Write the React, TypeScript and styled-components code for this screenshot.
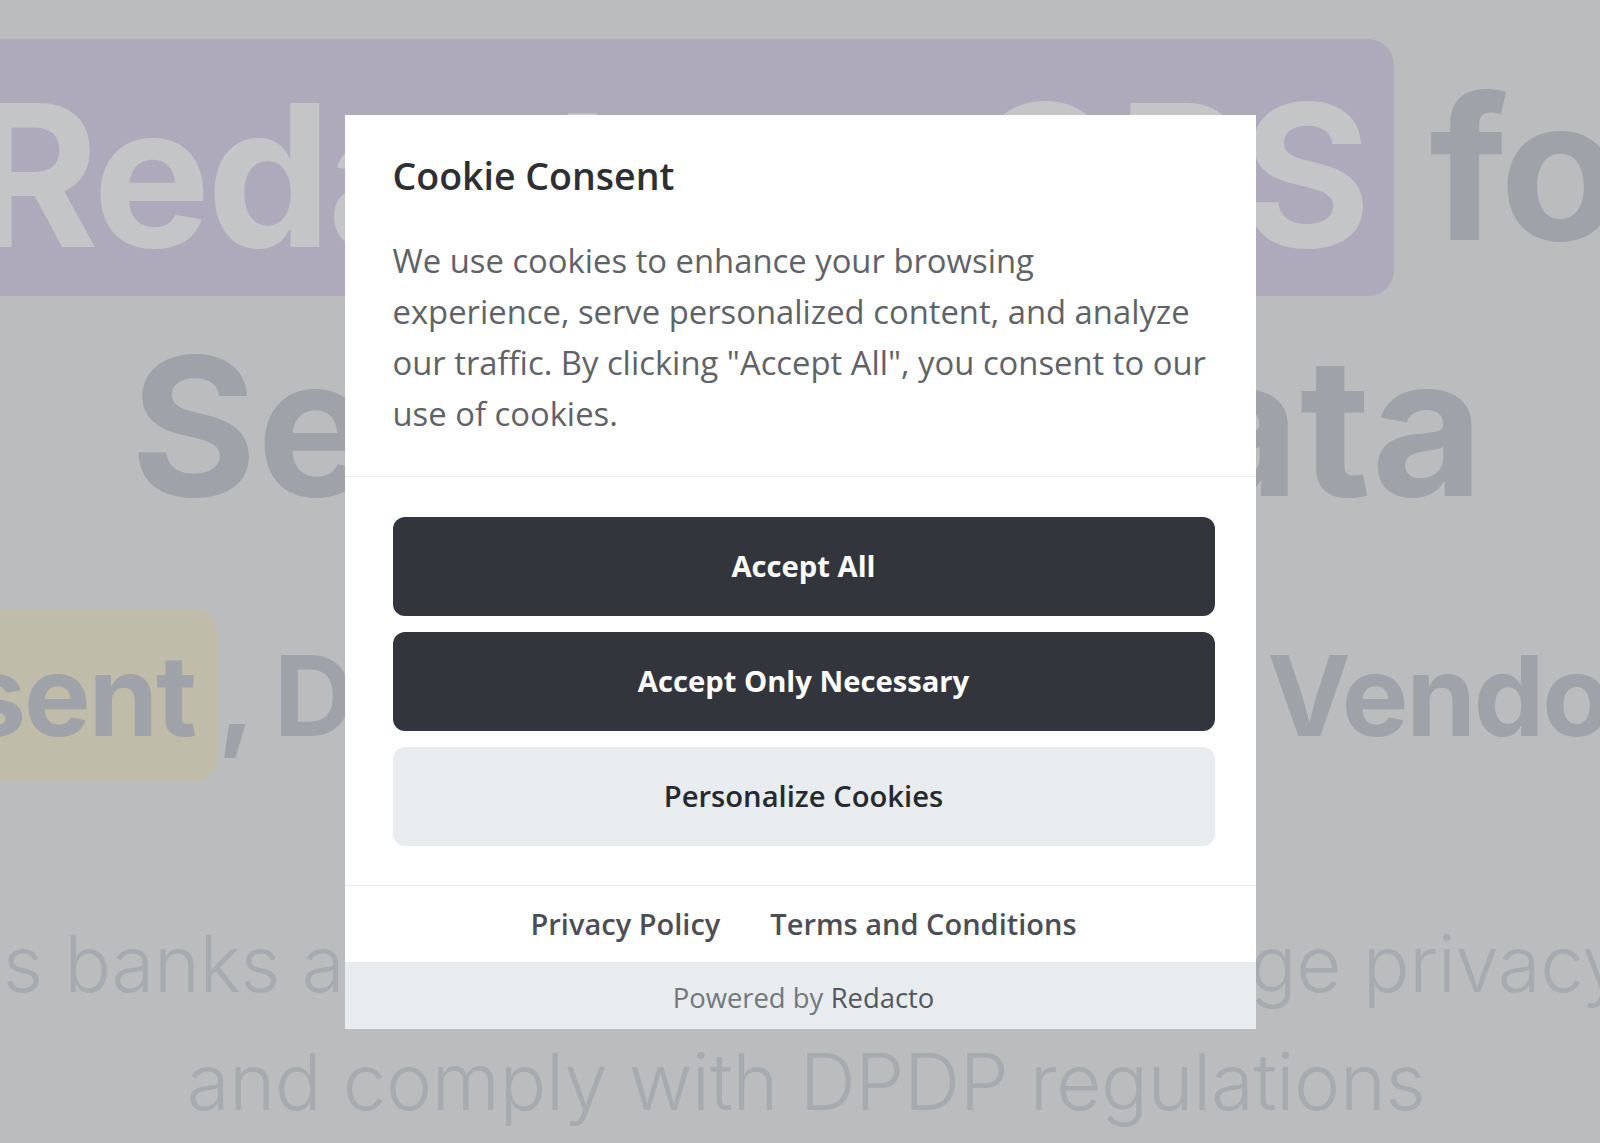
import React from "react";
import styled, { createGlobalStyle } from "styled-components";

const GlobalStyle = createGlobalStyle`
  html, body {
    margin: 0;
    padding: 0;
  }
  body {
    background: #bbbcbe;
    overflow: hidden;
  }
  * {
    box-sizing: border-box;
  }
`;

/* ---------- dimmed landing page behind the dialog ---------- */

const Page = styled.main`
  height: 1143px;
  overflow: hidden;
  background: #bbbcbe;
  font-family: Inter, "Liberation Sans", sans-serif;
  display: flex;
  flex-direction: column;
  padding-top: 39px;
  color: #9fa2a8;
`;

const SplitLine = styled.div<{ $ml: number; $mr: number; $top?: number }>`
  display: flex;
  align-items: center;
  justify-content: space-between;
  white-space: nowrap;
  margin: ${(p) => p.$top ?? 0}px ${(p) => p.$mr}px 0 ${(p) => p.$ml}px;
`;

const CenterLine = styled.div<{ $shift?: number }>`
  display: flex;
  justify-content: center;
  white-space: nowrap;
  padding-left: ${(p) => p.$shift ?? 0}px;
`;

const MegaGroup = styled.div`
  flex: 1;
  display: flex;
  align-items: center;
  font-size: 198px;
  font-weight: 700;
  letter-spacing: -0.02em;
  line-height: 1;
`;

const PurpleMark = styled.span`
  flex: 1;
  height: 257px;
  display: flex;
  align-items: center;
  justify-content: space-between;
  padding: 14px 27px 0 12px;
  background: #aeaabb;
  border-radius: 26px;
  color: #c4c5c7;
`;

const MegaWord = styled.span`
  margin-left: 35px;
  font-size: 198px;
  font-weight: 700;
  letter-spacing: -0.02em;
  line-height: 1;
`;

const Headline2 = styled.span`
  font-size: 193px;
  font-weight: 700;
  letter-spacing: 0;
  line-height: 260px;
`;

const SubGroup = styled.span`
  display: flex;
  align-items: center;
  font-size: 112px;
  font-weight: 700;
  letter-spacing: -0.02em;
  line-height: 172px;
`;

const YellowMark = styled.span`
  background: #c0bcaa;
  border-radius: 24px;
  padding: 0 23px;
  height: 172px;
`;

const Lead = styled.span`
  font-size: 78px;
  font-weight: 300;
  letter-spacing: -0.005em;
  line-height: 118px;
  color: #a7aaaf;
`;

/* ---------- cookie dialog ---------- */

const Overlay = styled.div`
  position: fixed;
  inset: 0;
  display: flex;
  align-items: center;
  justify-content: center;
`;

const Dialog = styled.section`
  width: 911px;
  background: #ffffff;
  display: flex;
  flex-direction: column;
  font-family: "Open Sans", "Noto Sans", sans-serif;
`;

const Header = styled.header`
  padding: 36px 41px 37px 48px;
  border-bottom: 1px solid #ededed;
`;

const Title = styled.h2`
  margin: 0 0 34px;
  font-size: 37.5px;
  line-height: 50px;
  font-weight: 600;
  color: #2d2f32;
`;

const Body = styled.p`
  margin: 0;
  font-size: 32.8px;
  line-height: 51px;
  color: #5f6368;
`;

const Actions = styled.div`
  display: flex;
  flex-direction: column;
  gap: 16px;
  padding: 40px 41px 39px 48px;
  border-bottom: 1px solid #ededed;
`;

const ActionButton = styled.button<{ $variant: "dark" | "light" }>`
  height: 99px;
  border: 0;
  border-radius: 12px;
  font-family: inherit;
  font-size: 29.2px;
  font-weight: ${(p) => (p.$variant === "dark" ? 700 : 600)};
  background: ${(p) => (p.$variant === "dark" ? "#32363c" : "#e9ecef")};
  color: ${(p) => (p.$variant === "dark" ? "#ffffff" : "#26292d")};
  cursor: pointer;
`;

const Links = styled.nav`
  height: 76px;
  display: flex;
  align-items: center;
  justify-content: center;
  gap: 50px;
  padding: 0 41px 0 48px;
`;

const LinkItem = styled.a`
  font-size: 29px;
  font-weight: 600;
  color: #4b4f55;
  text-decoration: none;
`;

const Footer = styled.footer`
  height: 67px;
  display: flex;
  align-items: center;
  justify-content: center;
  padding: 5px 41px 0 48px;
  background: #e9ecef;
  font-size: 27.4px;
  color: #72777c;
`;

const Brand = styled.span`
  margin-left: 0.27em;
  font-weight: 500;
  color: #52575d;
`;

export default function App() {
  return (
    <>
      <GlobalStyle />
      <Page>
        <SplitLine $ml={-43} $mr={-94}>
          <MegaGroup>
            <PurpleMark>
              <span>Redacto</span>
              <span>OPS</span>
            </PurpleMark>
          </MegaGroup>
          <MegaWord>for</MegaWord>
        </SplitLine>
        <CenterLine $shift={14}>
          <Headline2>Sensitive Data</Headline2>
        </CenterLine>
        <SplitLine $ml={-274} $mr={-52} $top={53}>
          <SubGroup>
            <YellowMark>Consent</YellowMark>, DSR &amp;
          </SubGroup>
          <SubGroup>Vendor</SubGroup>
        </SplitLine>
        <SplitLine $ml={-152} $mr={-25} $top={124}>
          <Lead>helps banks and</Lead>
          <Lead>manage privacy</Lead>
        </SplitLine>
        <CenterLine $shift={12}>
          <Lead>and comply with DPDP regulations</Lead>
        </CenterLine>
      </Page>
      <Overlay>
        <Dialog role="dialog" aria-labelledby="cc-title">
          <Header>
            <Title id="cc-title">Cookie Consent</Title>
            <Body>
              We use cookies to enhance your browsing experience, serve
              personalized content, and analyze our traffic. By clicking
              "Accept All", you consent to our use of cookies.
            </Body>
          </Header>
          <Actions>
            <ActionButton $variant="dark">Accept All</ActionButton>
            <ActionButton $variant="dark">Accept Only Necessary</ActionButton>
            <ActionButton $variant="light">Personalize Cookies</ActionButton>
          </Actions>
          <Links>
            <LinkItem href="#">Privacy Policy</LinkItem>
            <LinkItem href="#">Terms and Conditions</LinkItem>
          </Links>
          <Footer>
            Powered by<Brand>Redacto</Brand>
          </Footer>
        </Dialog>
      </Overlay>
    </>
  );
}
